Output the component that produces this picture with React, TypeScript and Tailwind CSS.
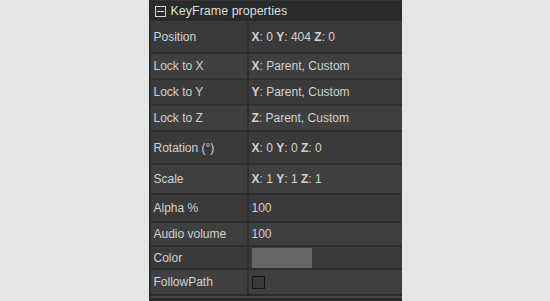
import React from 'react'

type Row = {
  label: string
  h: string
  value: React.ReactNode
}

function Axes({ parts }: { parts: [string, string][] }) {
  return (
    <span>
      {parts.map(([k, v], i) => (
        <span key={k}>
          {i > 0 ? ' ' : ''}
          <b className="font-bold">{k}</b>: {v}
        </span>
      ))}
    </span>
  )
}

const rows: Row[] = [
  { label: 'Position', h: 'h-[31px]', value: <Axes parts={[['X', '0'], ['Y', '404'], ['Z', '0']]} /> },
  { label: 'Lock to X', h: 'h-[26px]', value: <Axes parts={[['X', 'Parent, Custom']]} /> },
  { label: 'Lock to Y', h: 'h-[26px]', value: <Axes parts={[['Y', 'Parent, Custom']]} /> },
  { label: 'Lock to Z', h: 'h-[26px]', value: <Axes parts={[['Z', 'Parent, Custom']]} /> },
  { label: 'Rotation (°)', h: 'h-[33px]', value: <Axes parts={[['X', '0'], ['Y', '0'], ['Z', '0']]} /> },
  { label: 'Scale', h: 'h-[30px]', value: <Axes parts={[['X', '1'], ['Y', '1'], ['Z', '1']]} /> },
  { label: 'Alpha %', h: 'h-[28px]', value: '100' },
  { label: 'Audio volume', h: 'h-[24px]', value: '100' },
  { label: 'Color', h: 'h-[23px]', value: <div className="w-[60px] h-[20px] bg-[#666666]" /> },
  { label: 'FollowPath', h: 'h-[26px]', value: <div className="w-[13px] h-[13px] border border-[#141414] bg-[#3a3a3a]" /> },
]

export default function App() {
  return (
    <div className="w-[550px] h-[301px] bg-[#e5e5e5] overflow-hidden flex justify-center">
      <div
        className="w-[253px] h-full bg-[#2e2e2e] border-l-2 border-[#2a2a2a] flex flex-col text-[12px] text-[#d2d2d2]"
        style={{ fontFamily: '"Liberation Sans", Arial, sans-serif' }}
      >
        <div className="h-[21px] shrink-0 bg-[#2a2a2a] border-t border-[#353535] flex items-center gap-[5px] pl-[4px] text-[#dedede] text-[12.5px]">
          <span className="w-[11px] h-[11px] border border-[#d8d8d8] flex items-center justify-center">
            <span className="w-[7px] h-[1px] bg-[#e0e0e0]" />
          </span>
          <span>KeyFrame properties</span>
        </div>
        {rows.map((r, i) => (
          <div
            key={r.label}
            className={`${r.h} shrink-0 flex ${i > 0 ? 'border-t-2 border-[#2f2f2f]' : ''} ${i % 2 === 0 ? 'bg-[#3a3a3a]' : 'bg-[#3f3f3f]'}`}
          >
            <div className="w-[98px] shrink-0 flex items-center pl-[3px] border-r-2 border-[#2f2f2f]">{r.label}</div>
            <div className="flex-1 flex items-center pl-[3px]">{r.value}</div>
          </div>
        ))}
        <div className="h-[2px] shrink-0 bg-[#2a2a2a]" />
        <div className="h-[2px] shrink-0 bg-[#474747]" />
        <div className="flex-1 bg-[#2b2b2b]" />
      </div>
    </div>
  )
}
